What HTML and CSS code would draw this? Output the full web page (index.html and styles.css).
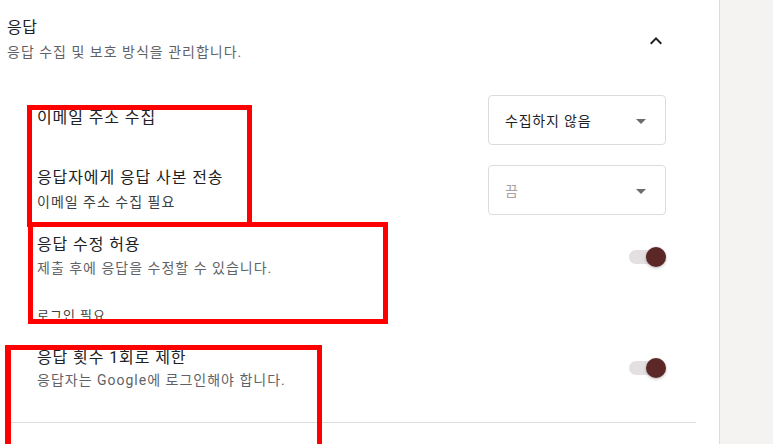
FILE: index.html
```html
<!DOCTYPE html>
<html lang="ko">
<head>
<meta charset="utf-8">
<link rel="stylesheet" href="styles.css">
</head>
<body>
<div class="panel">
  <div class="head">
    <div class="head-text">
      <div class="head-title">응답</div>
      <div class="head-sub">응답 수집 및 보호 방식을 관리합니다.</div>
    </div>
    <div class="chevron">
      <svg width="24" height="24" viewBox="0 0 24 24"><path d="M7.41 15.41L12 10.830l4.59 4.58L18 14l-6-6-6 6z" fill="#202124"/></svg>
    </div>
  </div>

  <div class="rows">
    <div class="row row-select first">
      <div class="label"><div class="title">이메일 주소 수집</div></div>
      <div class="select"><span class="select-text">수집하지 않음</span><span class="arrow"></span></div>
    </div>

    <div class="row row-select second">
      <div class="label">
        <div class="title">응답자에게 응답 사본 전송</div>
        <div class="note">이메일 주소 수집 필요</div>
      </div>
      <div class="select disabled"><span class="select-text">끔</span><span class="arrow"></span></div>
    </div>

    <div class="row row-toggle third">
      <div class="label">
        <div class="title">응답 수정 허용</div>
        <div class="sub">제출 후에 응답을 수정할 수 있습니다.</div>
      </div>
      <div class="toggle"><span class="track"></span><span class="thumb"></span></div>
    </div>
    <div class="login-note">로그인 필요</div>

    <div class="row row-toggle fourth">
      <div class="label">
        <div class="title">응답 횟수 1회로 제한</div>
        <div class="sub">응답자는 Google에 로그인해야 합니다.</div>
      </div>
      <div class="toggle"><span class="track"></span><span class="thumb"></span></div>
    </div>
  </div>

  <div class="divider"></div>

  <div class="mark mark-1"></div>
  <div class="mark mark-2"></div>
  <div class="mark mark-3"></div>
</div>
</body>
</html>
```

FILE: styles.css
```css
html, body {
  margin: 0;
  padding: 0;
  height: 100%;
  background: #f4f3f2;
  overflow: hidden;
}
body {
  font-family: Roboto, "Noto Sans CJK KR", sans-serif;
  color: #202124;
}
.panel {
  position: relative;
  width: 720px;
  height: 444px;
  background: #ffffff;
  border-right: 1px solid #dadce0;
  box-sizing: border-box;
  overflow: hidden;
}
.head {
  display: flex;
  justify-content: space-between;
  align-items: center;
  padding: 16px 51px 0 7px;
}
.head-title {
  font-size: 16px;
  line-height: 24px;
  letter-spacing: 0.6px;
  color: #202124;
}
.head-sub {
  margin-top: 2px;
  font-size: 14px;
  line-height: 20px;
  letter-spacing: 1px;
  color: #5f6368;
}
.chevron {
  width: 24px;
  height: 24px;
  margin-top: 4px;
}
.chevron svg { display: block; }

.rows {
  padding: 0 53px 0 37px;
}
.row {
  display: flex;
  justify-content: space-between;
}
.row-select { align-items: flex-start; }
.row-toggle { align-items: center; }
.first { margin-top: 33px; }
.first .label { padding-top: 11px; }
.second { margin-top: 20px; }
.second .label { padding-top: 1px; }
.third { margin-top: 18px; }
.fourth { margin-top: 20px; }

.title {
  font-size: 16px;
  line-height: 24px;
  letter-spacing: 0.9px;
  color: #202124;
}
.sub {
  margin-top: 1px;
  font-size: 14px;
  line-height: 20px;
  letter-spacing: 1px;
  color: #5f6368;
}
.note {
  margin-top: 2px;
  font-size: 14px;
  line-height: 20px;
  letter-spacing: 1px;
  color: #3c4043;
}
.login-note {
  margin-top: 28px;
  font-size: 13px;
  line-height: 20px;
  letter-spacing: 1px;
  color: #3c4043;
}
.fourth .sub { margin-top: 0; }

.select {
  box-sizing: border-box;
  width: 178px;
  height: 50px;
  border: 1px solid #dadce0;
  border-radius: 4px;
  display: flex;
  align-items: center;
  justify-content: space-between;
  padding: 0 19px 0 16px;
}
.select-text {
  font-size: 14px;
  letter-spacing: 0.8px;
  color: #202124;
}
.select.disabled .select-text { color: #a8a2a5; }
.arrow {
  width: 0;
  height: 0;
  border-left: 5px solid transparent;
  border-right: 5px solid transparent;
  border-top: 5px solid #6b6b70;
  margin-top: 2px;
}
.toggle {
  position: relative;
  width: 37px;
  height: 20px;
  display: flex;
  align-items: center;
  margin-top: 3px;
}
.fourth .toggle { margin-top: 0; }
.track {
  width: 34px;
  height: 14px;
  border-radius: 7px;
  background: #e4e0e1;
}
.thumb {
  position: absolute;
  left: 17px;
  top: 0;
  width: 20px;
  height: 20px;
  border-radius: 50%;
  background: #5b2727;
  box-shadow: 0 1px 3px rgba(0,0,0,0.3);
}
.divider {
  height: 1px;
  background: #dadce0;
  margin: 32px 23px 0 10px;
}

.mark {
  position: absolute;
  box-sizing: border-box;
  border: 5px solid #ff0000;
}
.mark-1 { left: 27px; top: 105px; width: 225px; height: 122px; }
.mark-2 { left: 28px; top: 222px; width: 360px; height: 102px; }
.mark-3 { left: 5px; top: 345px; width: 317px; height: 99px; border-left-width: 6px; border-bottom-width: 0; }
```
